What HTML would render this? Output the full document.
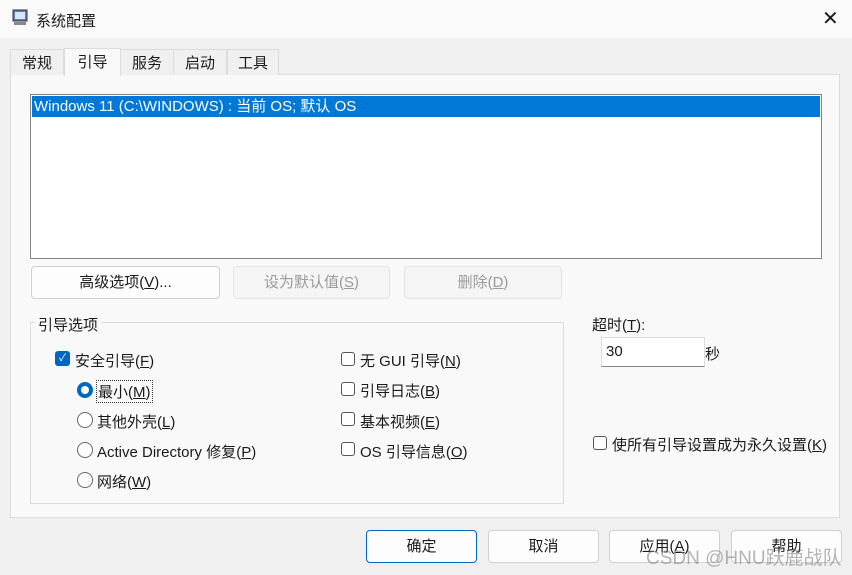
<!DOCTYPE html><html><head><meta charset="utf-8"><style>
*{margin:0;padding:0;box-sizing:border-box}
body{width:852px;height:575px;background:#f0f0f0;font-family:"Liberation Sans","Noto Sans CJK SC",sans-serif;font-size:15px;color:#1a1a1a;position:relative;overflow:hidden}
.a{position:absolute}
.title{left:0;top:0;width:852px;height:38px;background:#fafafa}
.tab{top:49px;height:26px;border:1px solid #dcdcdc;border-bottom:none;background:#f0f0f0;text-align:center;line-height:27px;font-size:15px}
.panel{left:10px;top:74px;width:830px;height:444px;background:#f9f9f9;border:1px solid #dcdcdc}
.btn{height:33px;border:1px solid #d0d0d0;border-radius:4px;background:#fdfdfd;text-align:center;line-height:32px;font-size:15px}
.dis{color:#9a9a9a;background:#f5f5f5;border-color:#e3e3e3}
.cb{width:14px;height:14px;border:1px solid #555;border-radius:3px;background:#fff}
.rb{width:16px;height:16px;border:1px solid #666;border-radius:50%;background:#fff}
u{text-decoration:underline}
</style></head><body>
<div class="a title"></div>
<svg class="a" style="left:11px;top:9px" width="18" height="18" viewBox="0 0 18 18"><rect x="2" y="1" width="14" height="11" fill="#5a7fb8" stroke="#333" stroke-width="1"/><rect x="4" y="3" width="10" height="7" fill="#d9e6f6"/><rect x="3" y="13" width="12" height="3" fill="#888"/></svg>
<div class="a" style="left:36px;top:10px;font-size:15px">系统配置</div>
<div class="a" style="left:822px;top:6px;font-size:20px;font-weight:300">✕</div>
<div class="a panel"></div>
<div class="a tab" style="left:10px;width:54px">常规</div>
<div class="a tab" style="left:173px;width:54px">启动</div>
<div class="a tab" style="left:120px;width:54px">服务</div>
<div class="a tab" style="left:227px;width:52px">工具</div>
<div class="a tab" style="left:64px;width:57px;top:48px;height:28px;background:#f9f9f9;z-index:2">引导</div>
<div class="a" style="left:30px;top:94px;width:792px;height:165px;background:#fff;border:1px solid #828282"></div>
<div class="a" style="left:32px;top:96px;width:788px;height:21px;background:#0078d7;color:#fff;line-height:22px;padding-left:2px;font-size:15px">Windows 11 (C:\WINDOWS) : 当前 OS; 默认 OS</div>
<div class="a btn" style="left:31px;top:266px;width:189px">高级选项(<u>V</u>)...</div>
<div class="a btn dis" style="left:233px;top:266px;width:157px">设为默认值(<u>S</u>)</div>
<div class="a btn dis" style="left:404px;top:266px;width:158px">删除(<u>D</u>)</div>
<div class="a" style="left:30px;top:322px;width:534px;height:182px;border:1px solid #dcdcdc"></div>
<div class="a" style="left:35px;top:314px;background:#f9f9f9;padding:0 3px">引导选项</div>
<div class="a" style="left:55px;top:351px;width:15px;height:15px;background:#0067c0;border-radius:3px;color:#fff;font-size:10px;text-align:center;line-height:15px">✓</div>
<div class="a" style="left:75px;top:350px">安全引导(<u>F</u>)</div>
<div class="a" style="left:77px;top:382px;width:16px;height:16px;border-radius:50%;background:#0067c0"><div style="margin:4px;width:8px;height:8px;border-radius:50%;background:#fff"></div></div>
<div class="a" style="left:96px;top:380px;border:1px dotted #333;padding:0 1px">最小(<u>M</u>)</div>
<div class="a rb" style="left:77px;top:412px"></div><div class="a" style="left:97px;top:411px">其他外壳(<u>L</u>)</div>
<div class="a rb" style="left:77px;top:442px"></div><div class="a" style="left:97px;top:441px">Active Directory 修复(<u>P</u>)</div>
<div class="a rb" style="left:77px;top:472px"></div><div class="a" style="left:97px;top:471px">网络(<u>W</u>)</div>
<div class="a cb" style="left:341px;top:352px"></div><div class="a" style="left:360px;top:350px">无 GUI 引导(<u>N</u>)</div>
<div class="a cb" style="left:341px;top:382px"></div><div class="a" style="left:360px;top:380px">引导日志(<u>B</u>)</div>
<div class="a cb" style="left:341px;top:412px"></div><div class="a" style="left:360px;top:411px">基本视频(<u>E</u>)</div>
<div class="a cb" style="left:341px;top:442px"></div><div class="a" style="left:360px;top:441px">OS 引导信息(<u>O</u>)</div>
<div class="a" style="left:592px;top:314px">超时(<u>T</u>):</div>
<div class="a" style="left:601px;top:337px;width:104px;height:30px;background:#fff;border:1px solid #dcdcdc;border-bottom:1px solid #888;line-height:28px;padding-left:4px;font-size:15px">30</div>
<div class="a" style="left:705px;top:343px">秒</div>
<div class="a cb" style="left:593px;top:436px"></div><div class="a" style="left:612px;top:434px">使所有引导设置成为永久设置(<u>K</u>)</div>
<div class="a btn" style="left:366px;top:530px;width:111px;border:1px solid #0067c0">确定</div>
<div class="a btn" style="left:488px;top:530px;width:111px">取消</div>
<div class="a btn" style="left:609px;top:530px;width:111px">应用(<u>A</u>)</div>
<div class="a btn" style="left:731px;top:530px;width:111px">帮助</div>
<div class="a" style="left:646px;top:543px;font-size:19px;color:rgba(120,120,120,.55)">CSDN @HNU跃鹿战队</div>
</body></html>
